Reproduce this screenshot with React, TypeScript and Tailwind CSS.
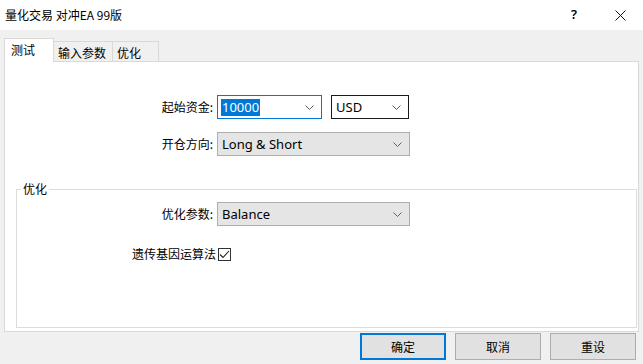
import React from "react";

const cjk = "font-['Noto_Sans_CJK_SC',sans-serif]";
const latin = "font-['Noto_Sans','Noto_Sans_CJK_SC',sans-serif]";

function Chevron({ color = "#606060" }: { color?: string }) {
  return (
    <svg width="9" height="5" viewBox="0 0 9 5" className="shrink-0">
      <path d="M0.5 0.5 L4.5 4.5 L8.5 0.5" fill="none" stroke={color} strokeWidth="1" />
    </svg>
  );
}

function Combo({
  value,
  width,
  variant = "gray",
  highlight = false,
}: {
  value: string;
  width: string;
  variant?: "gray" | "focus" | "dark";
  highlight?: boolean;
}) {
  const box =
    variant === "focus"
      ? "bg-white border-[#0078d7]"
      : variant === "dark"
      ? "bg-white border-[#1a1a1a]"
      : "bg-[#e5e5e5] border-[#adadad]";
  return (
    <div className={`${width} h-[24px] border ${box} flex items-center justify-between pl-[3px] pr-[7px]`}>
      <span
        className={`${latin} text-[13px] leading-[17px] px-[1px] ${
          highlight ? "bg-[#0078d7] text-white" : "text-black"
        }`}
      >
        {value}
      </span>
      <Chevron />
    </div>
  );
}

function Row({ label, labelW, children }: { label: string; labelW: string; children: React.ReactNode }) {
  return (
    <div className="flex items-center gap-[4px]">
      <div className={`${labelW} text-right ${cjk} text-[12px] text-black`}>{label}</div>
      {children}
    </div>
  );
}

export default function App() {
  return (
    <div className="w-[643px] h-[364px] overflow-hidden bg-[#f0f0f0] flex flex-col">
      {/* title bar */}
      <div className="h-[30px] bg-white flex items-center justify-between pl-[5px] shrink-0">
        <span className={`${cjk} text-[12px] text-black`}>量化交易 对冲EA 99版</span>
        <div className="flex items-center h-full">
          <span className={`${latin} text-[13px] font-semibold text-black w-[46px] text-center`}>?</span>
          <div className="w-[46px] flex justify-center">
            <svg width="11" height="11" viewBox="0 0 11 11">
              <path d="M0.5 0.5 L10.5 10.5 M10.5 0.5 L0.5 10.5" stroke="#111" strokeWidth="1" />
            </svg>
          </div>
        </div>
      </div>

      {/* tabs */}
      <div className="flex items-end pl-[4px] pt-[8px] -mb-px relative z-10">
        <div className={`w-[50px] h-[24px] bg-white border border-b-0 border-[#d9d9d9] ${cjk} text-[12px] text-black pl-[6px] pt-[2px]`}>
          测试
        </div>
        <div className={`w-[59px] h-[21px] bg-[#f0f0f0] border border-l-0 border-[#d9d9d9] ${cjk} text-[12px] text-black pl-[4px] pt-[2px]`}>
          输入参数
        </div>
        <div className={`w-[46px] h-[21px] bg-[#f0f0f0] border border-l-0 border-[#d9d9d9] ${cjk} text-[12px] text-black pl-[4px] pt-[2px]`}>
          优化
        </div>
      </div>

      {/* panel */}
      <div className="ml-[4px] w-[635px] h-[271px] bg-white border border-[#d9d9d9] flex flex-col">
        <div className="pt-[33px] flex flex-col gap-[13px]">
          <Row label="起始资金:" labelW="w-[208px]">
            <Combo value="10000" width="w-[105px]" variant="focus" highlight />
            <div className="ml-[5px]">
              <Combo value="USD" width="w-[78px]" variant="dark" />
            </div>
          </Row>
          <Row label="开仓方向:" labelW="w-[208px]">
            <Combo value="Long & Short" width="w-[193px]" />
          </Row>
        </div>

        {/* group box */}
        <div className="relative ml-[11px] mt-[33px] w-[621px] h-[139px] border border-[#dcdcdc]">
          <span className={`absolute -top-[9px] left-[4px] bg-white px-[2px] ${cjk} text-[12px] leading-[16px] text-black`}>
            优化
          </span>
          <div className="pt-[12px] flex flex-col gap-[19px]">
            <Row label="优化参数:" labelW="w-[196px]">
              <Combo value="Balance" width="w-[193px]" />
            </Row>
            <div className="flex items-center">
              <div className={`w-[199px] text-right ${cjk} text-[12px] text-black`}>遗传基因运算法</div>
              <div className="ml-[2px] w-[13px] h-[13px] border border-[#333] bg-white flex items-center justify-center">
                <svg width="11" height="9" viewBox="0 0 11 9">
                  <path d="M1 4.5 L4 7.5 L10 1" fill="none" stroke="#222" strokeWidth="1.1" />
                </svg>
              </div>
            </div>
          </div>
        </div>
      </div>

      {/* buttons */}
      <div className="flex justify-end gap-[9px] pr-[7px] mt-[1px]">
        <button className={`w-[86px] h-[27px] bg-[#e1e1e1] border-2 border-[#0078d7] ${cjk} text-[12px] text-black`}>
          确定
        </button>
        <button className={`w-[86px] h-[27px] bg-[#e1e1e1] border border-[#adadad] ${cjk} text-[12px] text-black`}>
          取消
        </button>
        <button className={`w-[86px] h-[27px] bg-[#e1e1e1] border border-[#adadad] ${cjk} text-[12px] text-black`}>
          重设
        </button>
      </div>
    </div>
  );
}
